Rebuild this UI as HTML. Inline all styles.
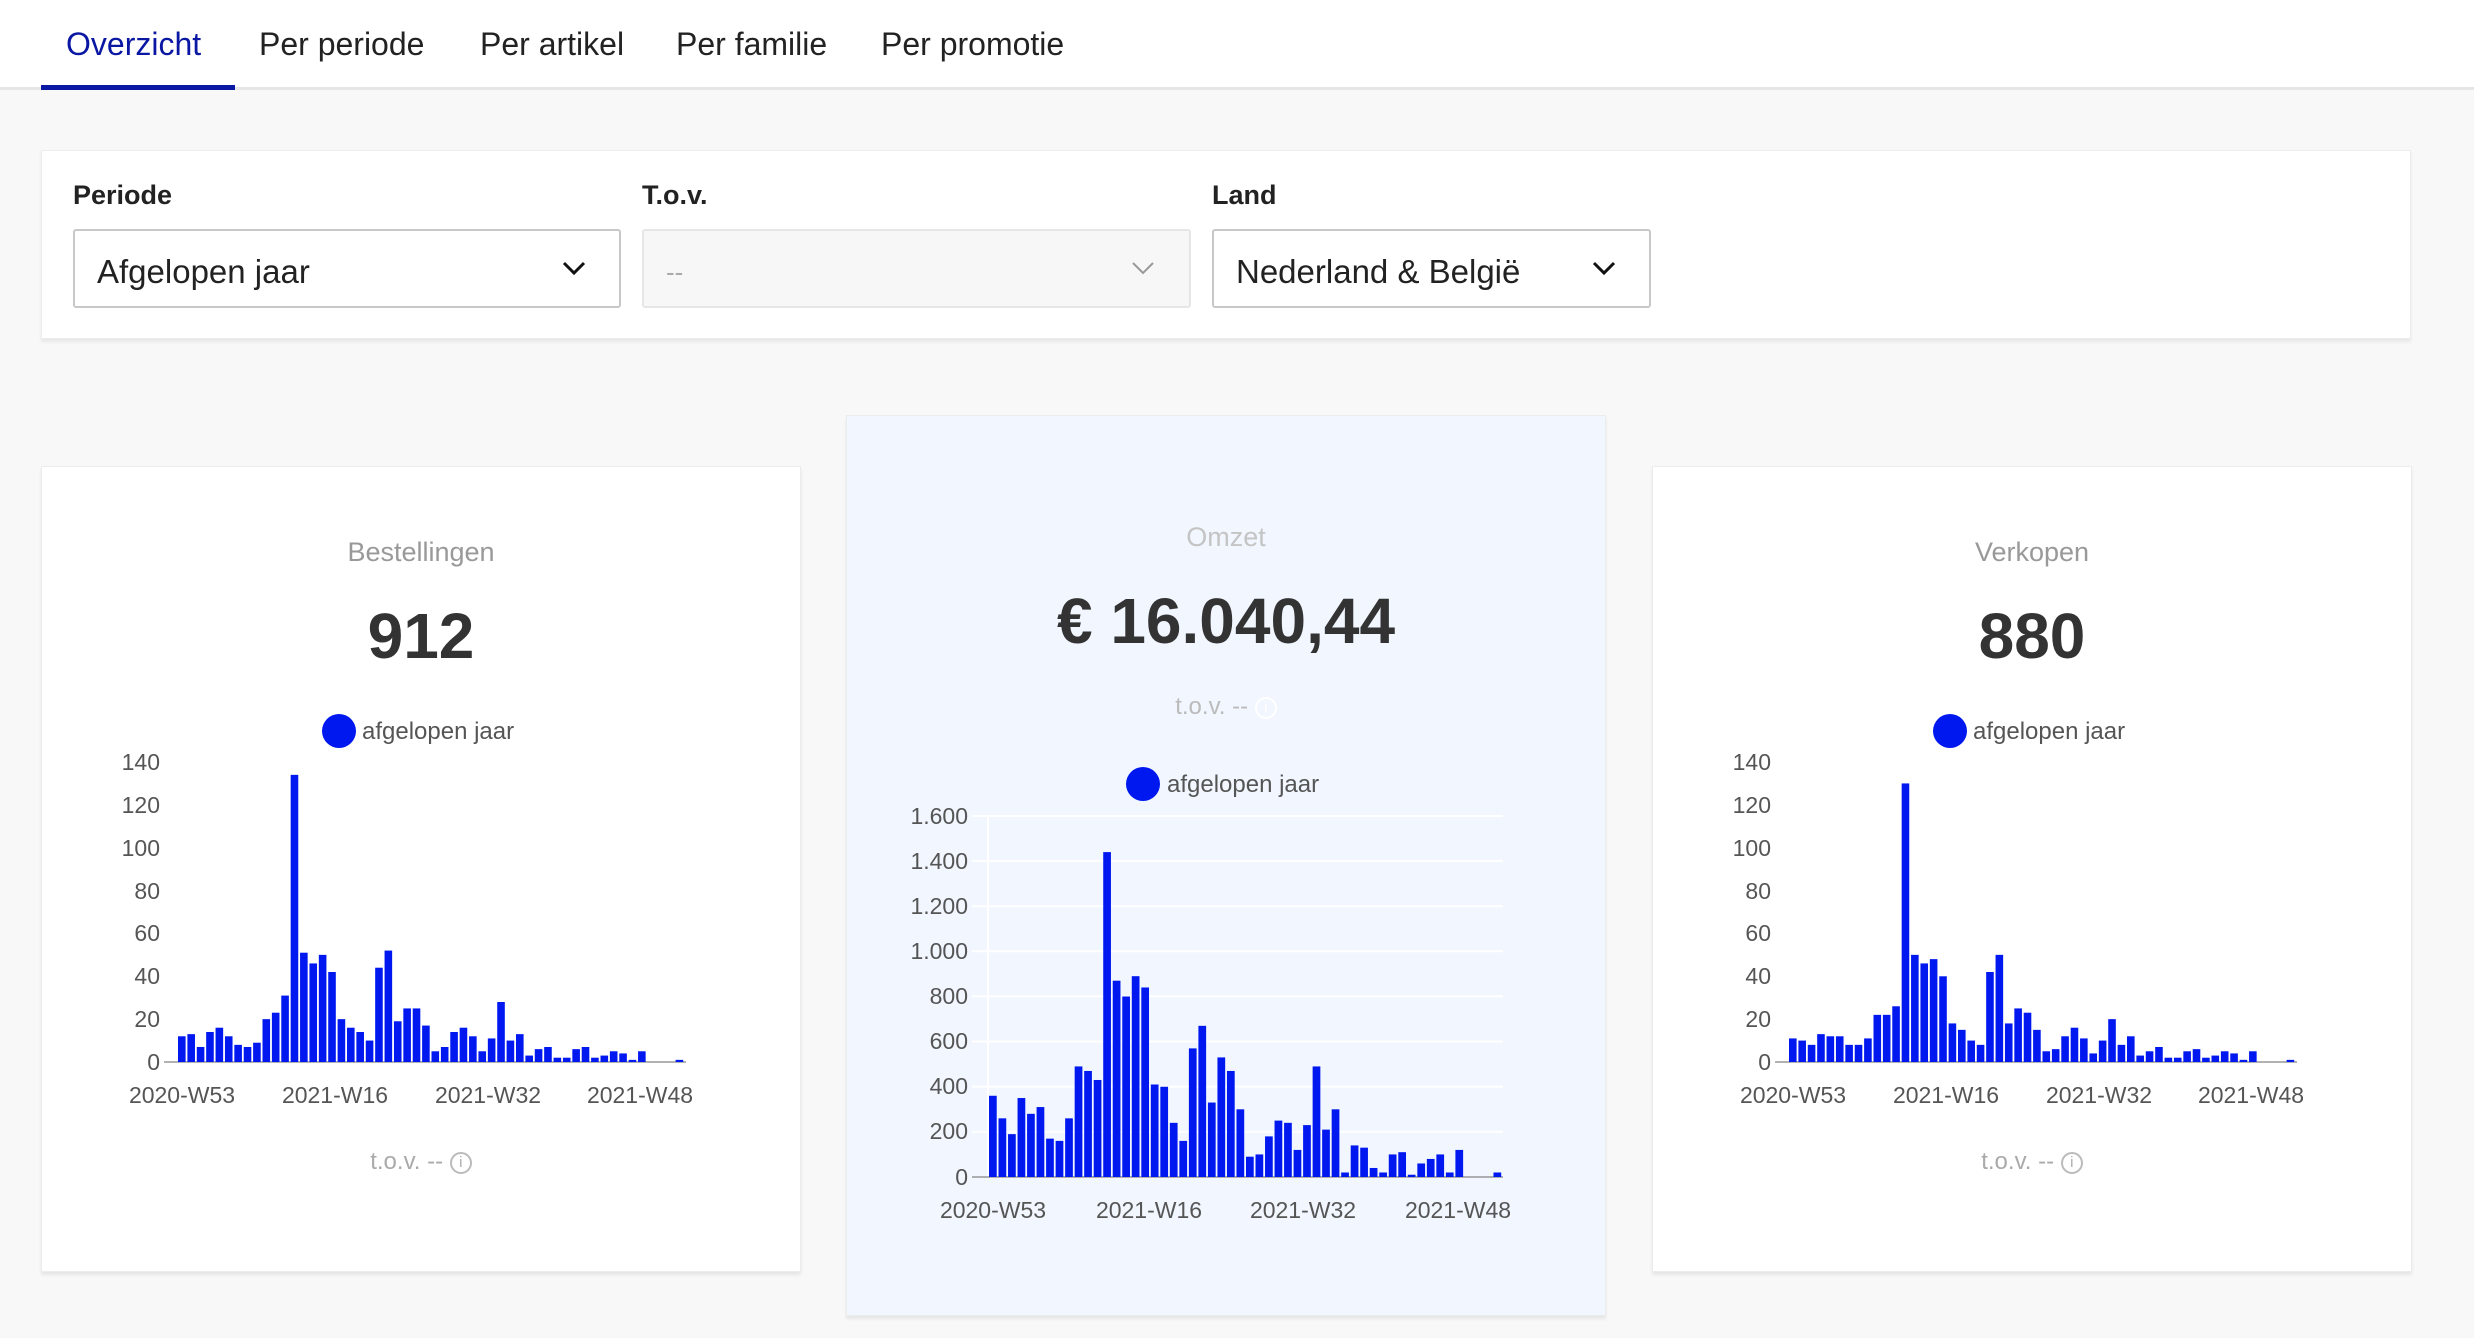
<!DOCTYPE html>
<html><head><meta charset="utf-8">
<style>
*{box-sizing:border-box;margin:0;padding:0}
body{width:2474px;height:1338px;background:#f8f8f8;font-family:"Liberation Sans",sans-serif;position:relative;overflow:hidden;color:#333}
.nav{position:absolute;left:0;top:0;width:2474px;height:90px;background:#fff;border-bottom:3px solid #e6e6e6}
.tab{position:absolute;top:26px;font-size:32px;color:#222}
.ul{position:absolute;left:41px;top:85px;width:194px;height:5px;background:#0a17a3}
.filter{position:absolute;left:41px;top:150px;width:2370px;height:189px;background:#fff;border:1px solid #ececec;box-shadow:0 3px 3px #e8e8e8}
.lab{position:absolute;top:180px;font-size:27px;font-weight:bold;color:#222}
.sel{position:absolute;top:229px;height:79px;border:2px solid #c8c8c8;border-radius:3px;background:#fff;font-size:33px;padding:22px 0 0 22px;color:#222}
.sel svg{position:absolute;top:28px}
.card{position:absolute;background:#fff;border:1px solid #ececec;box-shadow:0 3px 3px #e6e6e6}
.t{position:absolute;width:100%;text-align:center}
svg text{font-family:"Liberation Sans",sans-serif}
</style></head><body>
<div class="nav">
<div class="tab" style="left:66px;color:#0a17a3">Overzicht</div>
<div class="tab" style="left:259px">Per periode</div>
<div class="tab" style="left:480px">Per artikel</div>
<div class="tab" style="left:676px">Per familie</div>
<div class="tab" style="left:881px">Per promotie</div>
<div class="ul"></div>
</div>
<div class="filter"></div>
<div class="lab" style="left:73px">Periode</div>
<div class="lab" style="left:642px">T.o.v.</div>
<div class="lab" style="left:1212px">Land</div>
<div class="sel" style="left:73px;width:548px">Afgelopen jaar<svg style="left:486px" width="26" height="18" viewBox="0 0 26 18"><path d="M3 4l10 10 10-10" fill="none" stroke="#111" stroke-width="3"/></svg></div>
<div class="sel" style="left:642px;width:549px;background:#f7f7f7;border-color:#e6e6e6;color:#aaa;font-size:26px;padding-top:26px">--<svg style="left:486px" width="26" height="18" viewBox="0 0 26 18"><path d="M3 4l10 10 10-10" fill="none" stroke="#999" stroke-width="2"/></svg></div>
<div class="sel" style="left:1212px;width:439px">Nederland &amp; België<svg style="left:377px" width="26" height="18" viewBox="0 0 26 18"><path d="M3 4l10 10 10-10" fill="none" stroke="#111" stroke-width="3"/></svg></div>

<div class="card" style="left:41px;top:466px;width:760px;height:806px">
<div class="t" style="top:70px;font-size:27px;color:#999">Bestellingen</div>
<div class="t" style="top:132px;font-size:64px;font-weight:bold;color:#333">912</div>
<div class="t" style="top:681px;font-size:24px;color:#aaa">t.o.v. -- <span style="display:inline-block;width:22px;height:22px;border:2px solid #bbb;border-radius:50%;font-size:15px;line-height:18px;vertical-align:middle">i</span></div>
</div>
<div class="card" style="left:846px;top:415px;width:760px;height:901px;background:#f1f6ff">
<div class="t" style="top:106px;font-size:27px;color:#c4c4c4">Omzet</div>
<div class="t" style="top:168px;font-size:64px;font-weight:bold;color:#333">€ 16.040,44</div>
<div class="t" style="top:277px;font-size:24px;color:#bbb">t.o.v. -- <span style="display:inline-block;width:22px;height:22px;border:2px solid #fff;border-radius:50%;font-size:15px;line-height:18px;vertical-align:middle;color:#fff">i</span></div>
</div>
<div class="card" style="left:1652px;top:466px;width:760px;height:806px">
<div class="t" style="top:70px;font-size:27px;color:#999">Verkopen</div>
<div class="t" style="top:132px;font-size:64px;font-weight:bold;color:#333">880</div>
<div class="t" style="top:681px;font-size:24px;color:#aaa">t.o.v. -- <span style="display:inline-block;width:22px;height:22px;border:2px solid #bbb;border-radius:50%;font-size:15px;line-height:18px;vertical-align:middle">i</span></div>
</div>

<svg id="s" style="position:absolute;left:0;top:0" width="2474" height="1338">
<g font-size="23" fill="#555">
<!-- left -->
<circle cx="339" cy="731" r="17" fill="#0018f0"/><text x="362" y="739" font-size="24">afgelopen jaar</text>
<g text-anchor="end"><text x="160" y="770">140</text><text x="160" y="813">120</text><text x="160" y="856">100</text><text x="160" y="899">80</text><text x="160" y="941">60</text><text x="160" y="984">40</text><text x="160" y="1027">20</text><text x="160" y="1070">0</text></g>
<g text-anchor="middle"><text x="182" y="1103">2020-W53</text><text x="335" y="1103">2021-W16</text><text x="488" y="1103">2021-W32</text><text x="640" y="1103">2021-W48</text></g>
<line x1="164" y1="1062" x2="686" y2="1062" stroke="#666" stroke-width="1"/>
<!-- right -->
<circle cx="1950" cy="731" r="17" fill="#0018f0"/><text x="1973" y="739" font-size="24">afgelopen jaar</text>
<g text-anchor="end"><text x="1771" y="770">140</text><text x="1771" y="813">120</text><text x="1771" y="856">100</text><text x="1771" y="899">80</text><text x="1771" y="941">60</text><text x="1771" y="984">40</text><text x="1771" y="1027">20</text><text x="1771" y="1070">0</text></g>
<g text-anchor="middle"><text x="1793" y="1103">2020-W53</text><text x="1946" y="1103">2021-W16</text><text x="2099" y="1103">2021-W32</text><text x="2251" y="1103">2021-W48</text></g>
<line x1="1775" y1="1062" x2="2297" y2="1062" stroke="#666" stroke-width="1"/>
<!-- middle -->
<circle cx="1143" cy="784" r="17" fill="#0018f0"/><text x="1167" y="792" font-size="24">afgelopen jaar</text>
<g id="grid" stroke="#fff" stroke-width="2"></g>
<g text-anchor="end"><text x="968" y="824">1.600</text><text x="968" y="869">1.400</text><text x="968" y="914">1.200</text><text x="968" y="959">1.000</text><text x="968" y="1004">800</text><text x="968" y="1049">600</text><text x="968" y="1094">400</text><text x="968" y="1139">200</text><text x="968" y="1185">0</text></g>
<g text-anchor="middle"><text x="993" y="1218">2020-W53</text><text x="1149" y="1218">2021-W16</text><text x="1303" y="1218">2021-W32</text><text x="1458" y="1218">2021-W48</text></g>
<line x1="972" y1="1177" x2="1503" y2="1177" stroke="#666" stroke-width="1"/>
</g>
<g id="bars" fill="#0018f0"></g>
</svg>
<script>
var L=[12,13,7,14,16,12,8,7,9,20,23,31,134,51,46,50,42,20,16,14,10,44,52,19,25,25,17,5,7,14,16,12,5,11,28,10,13,3,6,7,2,2,6,7,2,3,5,4,1,5,0,0,0,1];
var M=[360,260,190,350,280,310,170,160,260,490,470,430,1440,870,800,890,840,410,400,240,160,570,670,330,530,470,300,90,100,180,250,240,120,230,490,210,300,20,140,130,40,20,100,110,10,60,80,100,20,120,0,0,0,20];
var R=[11,10,8,13,12,12,8,8,11,22,22,26,130,50,46,48,40,18,15,10,8,42,50,18,25,23,15,5,6,12,16,11,4,10,20,8,12,3,5,7,2,2,5,6,2,3,5,4,1,5,0,0,0,1];
var ns="http://www.w3.org/2000/svg",g=document.getElementById('bars'),gr=document.getElementById('grid');
function draw(d,x0,x1,y0,h,max){var s=(x1-x0)/d.length;d.forEach(function(v,i){if(!v)return;var r=document.createElementNS(ns,'rect');var bh=v/max*h;r.setAttribute('x',x0+i*s);r.setAttribute('width',s-1.8);r.setAttribute('y',y0-bh);r.setAttribute('height',bh);g.appendChild(r);});}
for(var i=0;i<8;i++){var l=document.createElementNS(ns,'line');var y=816+i*45.1;l.setAttribute('x1',972);l.setAttribute('x2',1503);l.setAttribute('y1',y);l.setAttribute('y2',y);gr.appendChild(l);}
var v=document.createElementNS(ns,'line');v.setAttribute('x1',988);v.setAttribute('x2',988);v.setAttribute('y1',816);v.setAttribute('y2',1177);gr.appendChild(v);
draw(L,178,685,1062,300,140);
draw(R,1789,2296,1062,300,140);
draw(M,989,1503,1177,361,1600);
</script>
</body></html>
